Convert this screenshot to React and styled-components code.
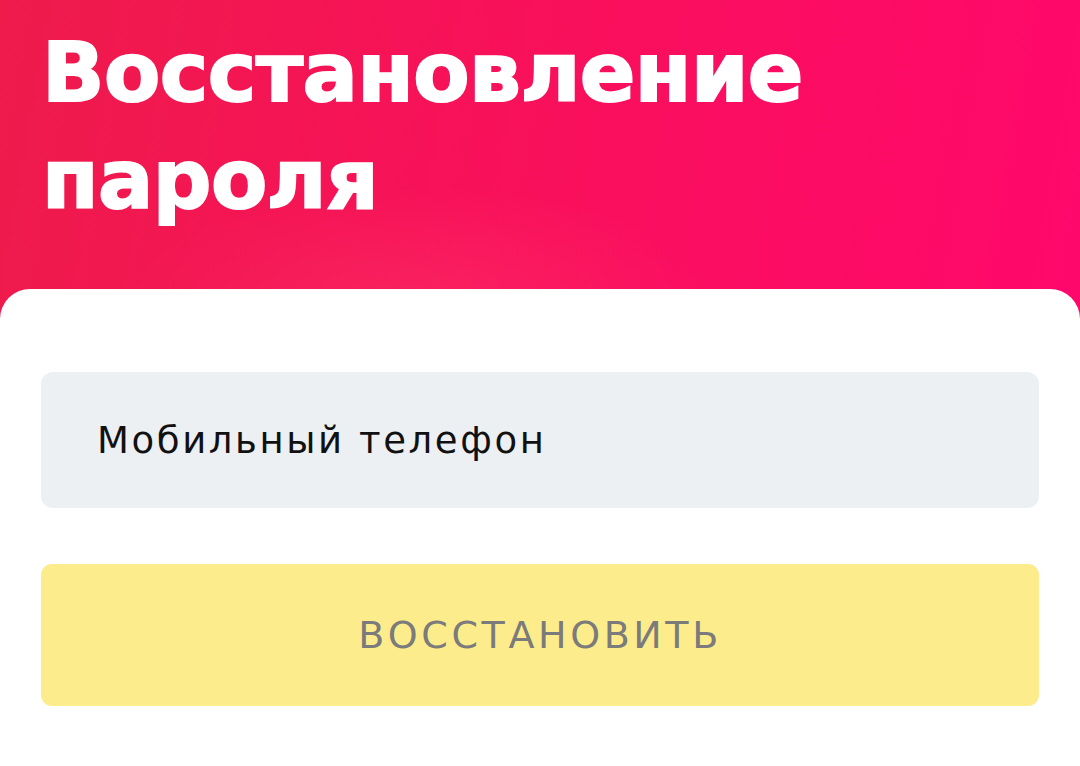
import React from 'react';
import styled, { createGlobalStyle } from 'styled-components';

const Global = createGlobalStyle`
  html, body {
    margin: 0;
    padding: 0;
    background: #ffffff;
  }
  * { box-sizing: border-box; }
`;

const Page = styled.div`
  width: 1080px;
  height: 766px;
  overflow: hidden;
  background: #ffffff;
  font-family: "DejaVu Sans", "Open Sans", sans-serif;
`;

const Header = styled.header`
  height: 319px;
  padding: 19px 42px 0;
  background:
    radial-gradient(ellipse 420px 160px at 420px 300px, rgba(255, 70, 110, 0.3), rgba(255, 70, 110, 0) 70%),
    linear-gradient(100deg, #ee1b4b 0%, #f8115a 45%, #ff086c 100%);
`;

const Title = styled.h1`
  margin: 0;
  color: #ffffff;
  font-size: 82px;
  line-height: 107px;
  font-weight: 700;
  letter-spacing: -0.6px;
  -webkit-text-stroke: 2px #ffffff;
`;

const Card = styled.main`
  margin-top: -30px;
  border-radius: 30px 30px 0 0;
  background: #ffffff;
  padding: 83px 41px 0;
  display: flex;
  flex-direction: column;
  gap: 56px;
`;

const Field = styled.input`
  width: 100%;
  height: 136px;
  border: none;
  outline: none;
  border-radius: 12px;
  background: #edf0f3;
  padding: 0 56px;
  font-family: inherit;
  font-size: 37px;
  letter-spacing: 2.6px;
  color: #111111;
  &::placeholder {
    color: #111111;
  }
`;

const Submit = styled.button`
  width: 100%;
  height: 142px;
  border: none;
  border-radius: 11px;
  background: #fdec8b;
  color: #7b7b7b;
  font-family: inherit;
  font-size: 38px;
  letter-spacing: 3.6px;
  text-transform: uppercase;
  cursor: pointer;
`;

export default function App() {
  return (
    <Page>
      <Global />
      <Header>
        <Title>
          Восстановление
          <br />
          пароля
        </Title>
      </Header>
      <Card>
        <Field type="tel" placeholder="Мобильный телефон" />
        <Submit type="button">Восстановить</Submit>
      </Card>
    </Page>
  );
}
